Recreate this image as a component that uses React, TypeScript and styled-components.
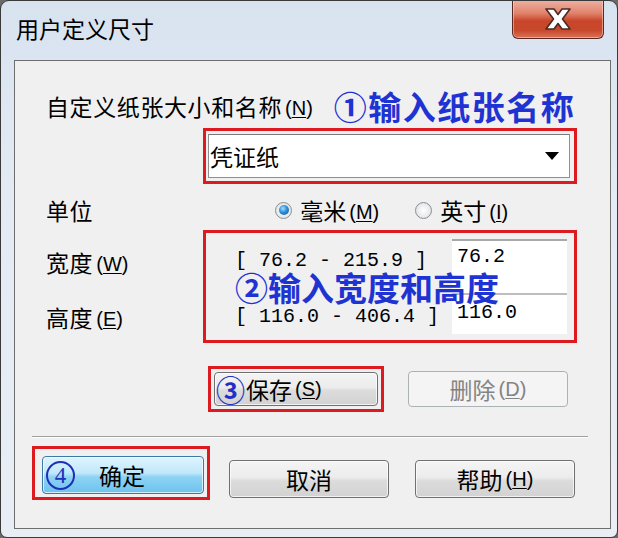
import React from 'react';
import styled, { createGlobalStyle } from 'styled-components';

const GlobalStyle = createGlobalStyle`
  html, body {
    margin: 0;
    padding: 0;
    background: #6a6a6a;
  }
  * {
    box-sizing: border-box;
  }
`;

const UI_FONT = `"Noto Sans CJK SC", "Noto Sans", sans-serif`;

const Window = styled.div`
  width: 618px;
  height: 538px;
  border: 1px solid #3a3a3a;
  border-radius: 9px 9px 7px 7px;
  background: linear-gradient(180deg, #d8e3f0 0%, #e4ebf4 40%, #e9eef5 100%);
  display: flex;
  flex-direction: column;
  overflow: hidden;
  font-family: ${UI_FONT};
  color: #000;
`;

const TitleBar = styled.div`
  height: 59px;
  display: flex;
  justify-content: space-between;
  align-items: flex-start;
  padding: 0 13px 0 15px;
`;

const Title = styled.div`
  font-size: 23px;
  line-height: 1;
  margin-top: 16px;
`;

const CloseButton = styled.div`
  width: 92px;
  height: 39px;
  margin-top: -1px;
  border: 1px solid #5a2a20;
  border-top: none;
  border-radius: 0 0 6px 6px;
  background: linear-gradient(180deg, #eeb2a3 0%, #e1826b 35%, #c9452a 55%, #c8482c 80%, #d9735a 100%);
  box-shadow: inset 0 0 0 1px rgba(255, 220, 210, 0.5);
  display: flex;
  align-items: center;
  justify-content: center;
`;

const Client = styled.div`
  flex: 1;
  margin: 0 6px 8px 13px;
  border: 1px solid #6e6e6e;
  background: #f0f0f0;
  display: flex;
  flex-direction: column;
  padding-top: 23px;
`;

const NameRow = styled.div`
  height: 44px;
  display: flex;
  align-items: center;
  padding-left: 31px;
`;

const Label = styled.span`
  font-size: 23px;
  line-height: 1;
  letter-spacing: 0.6px;
  white-space: nowrap;
`;

const Key = styled.span`
  font-family: "Liberation Sans", sans-serif;
  font-size: 20px;
  letter-spacing: 0;
  margin-left: 3px;
  vertical-align: 1px;
  u {
    text-decoration-thickness: 1px;
    text-underline-offset: 2px;
  }
`;

const Note = styled.span`
  font-size: 33px;
  font-weight: 700;
  color: #1f33d3;
  line-height: 1;
  white-space: nowrap;
  letter-spacing: 1.5px;
`;

const NameNote = styled(Note)`
  margin-left: 21px;
`;

const RedFrame = styled.div`
  border: 3px solid #dc1a20;
`;

const ComboFrame = styled(RedFrame)`
  margin-left: 188px;
  width: 374px;
  height: 56px;
  padding: 3px 4px 3px 2px;
`;

const Combo = styled.div`
  height: 100%;
  border: 1px solid #8e8f8f;
  border-top-color: #7a7a7a;
  background: #fff;
  display: flex;
  align-items: center;
  justify-content: space-between;
  padding: 0 10px 0 1px;
  font-size: 23px;
`;

const Caret = styled.span`
  width: 0;
  height: 0;
  border-left: 7px solid transparent;
  border-right: 7px solid transparent;
  border-top: 8px solid #000;
`;

const UnitRow = styled.div`
  height: 46px;
  display: flex;
  align-items: center;
  padding: 6px 0 0 31px;
`;

const RadioGroup = styled.div`
  display: flex;
  align-items: center;
  margin-left: 182px;
  gap: 36px;
`;

const RadioItem = styled.label`
  display: flex;
  align-items: center;
  gap: 8px;
  font-size: 23px;
  line-height: 1;
`;

const RadioDot = styled.span<{ $checked?: boolean }>`
  width: 17px;
  height: 17px;
  border-radius: 50%;
  border: 1px solid #8a8f94;
  background: radial-gradient(circle at 50% 50%, #ffffff 0%, #e4e6e8 70%, #cfd3d6 100%);
  display: flex;
  align-items: center;
  justify-content: center;
  &::after {
    content: '';
    width: 10px;
    height: 10px;
    border-radius: 50%;
    display: ${p => (p.$checked ? 'block' : 'none')};
    background: radial-gradient(circle at 40% 35%, #9fe0ff 0%, #2d8ed6 45%, #0b4f93 100%);
  }
`;

const SizeBlock = styled.div`
  display: flex;
  height: 113px;
`;

const SizeLabels = styled.div`
  width: 188px;
  padding-left: 31px;
  display: grid;
  grid-template-rows: 60px 50px;
  align-items: center;
  padding-top: 2px;
`;

const SizeFrame = styled(RedFrame)`
  position: relative;
  width: 374px;
  display: grid;
  grid-template-columns: 246px 115px;
  grid-template-rows: 60px 47px;
`;

const Range = styled.div<{ $shift: number }>`
  font-family: "Liberation Mono", monospace;
  font-size: 20px;
  line-height: 1;
  padding-left: 29px;
  display: flex;
  align-items: center;
  white-space: pre;
  transform: translateY(${p => p.$shift}px);
`;

const NumInput = styled.div<{ $first?: boolean }>`
  background: #fff;
  font-family: "Liberation Mono", monospace;
  font-size: 20px;
  padding-left: 5px;
  margin-top: ${p => (p.$first ? '6px' : '0')};
  border-top: 2px solid ${p => (p.$first ? '#a8a8a8' : '#bdbdbd')};
  padding-top: ${p => (p.$first ? '6px' : '8px')};
  line-height: 1;
  margin-bottom: ${p => (p.$first ? '0' : '6px')};
`;

const SizeNote = styled(Note)`
  position: absolute;
  left: 29px;
  top: 38px;
  letter-spacing: 0;
`;

const SaveRow = styled.div`
  display: flex;
  align-items: center;
  margin-top: 23px;
  padding-left: 193px;
  height: 46px;
`;

const SaveFrame = styled(RedFrame)`
  width: 176px;
  height: 46px;
  padding: 3px;
`;

const Button = styled.div<{ $variant?: 'default' | 'primary' | 'disabled' }>`
  height: 100%;
  border: 1px solid ${p => (p.$variant === 'primary' ? '#3b7aa8' : p.$variant === 'disabled' ? '#adb2b5' : '#707070')};
  border-radius: 4px;
  background: ${p =>
    p.$variant === 'primary'
      ? 'linear-gradient(180deg, #e0f4fd 0%, #bfe8fb 45%, #8fd3f4 55%, #6cc3ee 100%)'
      : p.$variant === 'disabled'
        ? '#f4f4f4'
        : 'linear-gradient(180deg, #f4f4f4 0%, #ececec 45%, #dcdcdc 55%, #d2d2d2 100%)'};
  box-shadow: inset 0 0 0 1px ${p => (p.$variant === 'disabled' ? 'transparent' : 'rgba(255,255,255,0.7)')};
  color: ${p => (p.$variant === 'disabled' ? '#838383' : '#000')};
  font-size: 23px;
  line-height: 1;
  display: flex;
  align-items: center;
  justify-content: center;
  white-space: nowrap;
`;

const SaveButton = styled(Button)`
  justify-content: flex-start;
  padding-left: 1px;
`;

const CircleNum = styled.span`
  color: #2330c8;
  font-size: 29px;
  font-weight: 700;
  margin-right: 1px;
`;

const DeleteButton = styled(Button)`
  width: 160px;
  height: 36px;
  margin-left: 24px;
`;

const Separator = styled.div`
  margin: 24px 22px 0 17px;
  height: 2px;
  border-top: 1px solid #a0a0a0;
  border-bottom: 1px solid #ffffff;
`;

const FooterRow = styled.div`
  display: flex;
  align-items: center;
  padding-left: 17px;
  margin-top: 8px;
  height: 54px;
`;

const OkFrame = styled(RedFrame)`
  width: 178px;
  height: 54px;
  padding: 7px 3px 3px 7px;
`;

const OkButton = styled(Button)`
  justify-content: flex-start;
  padding-left: 3px;
  gap: 24px;
`;

const OkNum = styled.span`
  color: #1f2fb8;
  font-family: "Liberation Serif", serif;
  font-size: 23px;
  width: 29px;
  height: 29px;
  border: 2px solid #1f2fb8;
  border-radius: 50%;
  display: flex;
  align-items: center;
  justify-content: center;
`;

const FooterButton = styled(Button)`
  width: 160px;
  height: 38px;
  margin-top: 12px;
  margin-left: 19px;
  & + & {
    margin-left: 26px;
  }
`;

const K = ({ c }: { c: string }) => (
  <Key>
    (<u>{c}</u>)
  </Key>
);

export default function App() {
  return (
    <>
      <GlobalStyle />
      <Window>
        <TitleBar>
          <Title>用户定义尺寸</Title>
          <CloseButton>
            <svg width="32" height="26" viewBox="0 0 32 26">
              <path
                d="M4 3 L12 3 L16 8.5 L20 3 L28 3 L20.5 13 L28 23 L20 23 L16 17.5 L12 23 L4 23 L11.5 13 Z"
                fill="#ffffff"
                stroke="#4a2a24"
                strokeWidth="1.6"
                strokeLinejoin="round"
              />
            </svg>
          </CloseButton>
        </TitleBar>
        <Client>
          <NameRow>
            <Label>
              自定义纸张大小和名称<K c="N" />
            </Label>
            <NameNote>①输入纸张名称</NameNote>
          </NameRow>
          <ComboFrame>
            <Combo>
              <span>凭证纸</span>
              <Caret />
            </Combo>
          </ComboFrame>
          <UnitRow>
            <Label>单位</Label>
            <RadioGroup>
              <RadioItem>
                <RadioDot $checked />
                <span>
                  毫米<K c="M" />
                </span>
              </RadioItem>
              <RadioItem>
                <RadioDot />
                <span>
                  英寸<K c="I" />
                </span>
              </RadioItem>
            </RadioGroup>
          </UnitRow>
          <SizeBlock>
            <SizeLabels>
              <Label>
                宽度<K c="W" />
              </Label>
              <Label>
                高度<K c="E" />
              </Label>
            </SizeLabels>
            <SizeFrame>
              <Range $shift={-2}>[ 76.2 - 215.9 ]</Range>
              <NumInput $first>76.2</NumInput>
              <Range $shift={0}>[ 116.0 - 406.4 ]</Range>
              <NumInput>116.0</NumInput>
              <SizeNote>②输入宽度和高度</SizeNote>
            </SizeFrame>
          </SizeBlock>
          <SaveRow>
            <SaveFrame>
              <SaveButton>
                <CircleNum>③</CircleNum>保存<K c="S" />
              </SaveButton>
            </SaveFrame>
            <DeleteButton $variant="disabled">
              删除<K c="D" />
            </DeleteButton>
          </SaveRow>
          <Separator />
          <FooterRow>
            <OkFrame>
              <OkButton $variant="primary">
                <OkNum>4</OkNum>
                <span>确定</span>
              </OkButton>
            </OkFrame>
            <FooterButton>取消</FooterButton>
            <FooterButton>
              帮助<K c="H" />
            </FooterButton>
          </FooterRow>
        </Client>
      </Window>
    </>
  );
}
